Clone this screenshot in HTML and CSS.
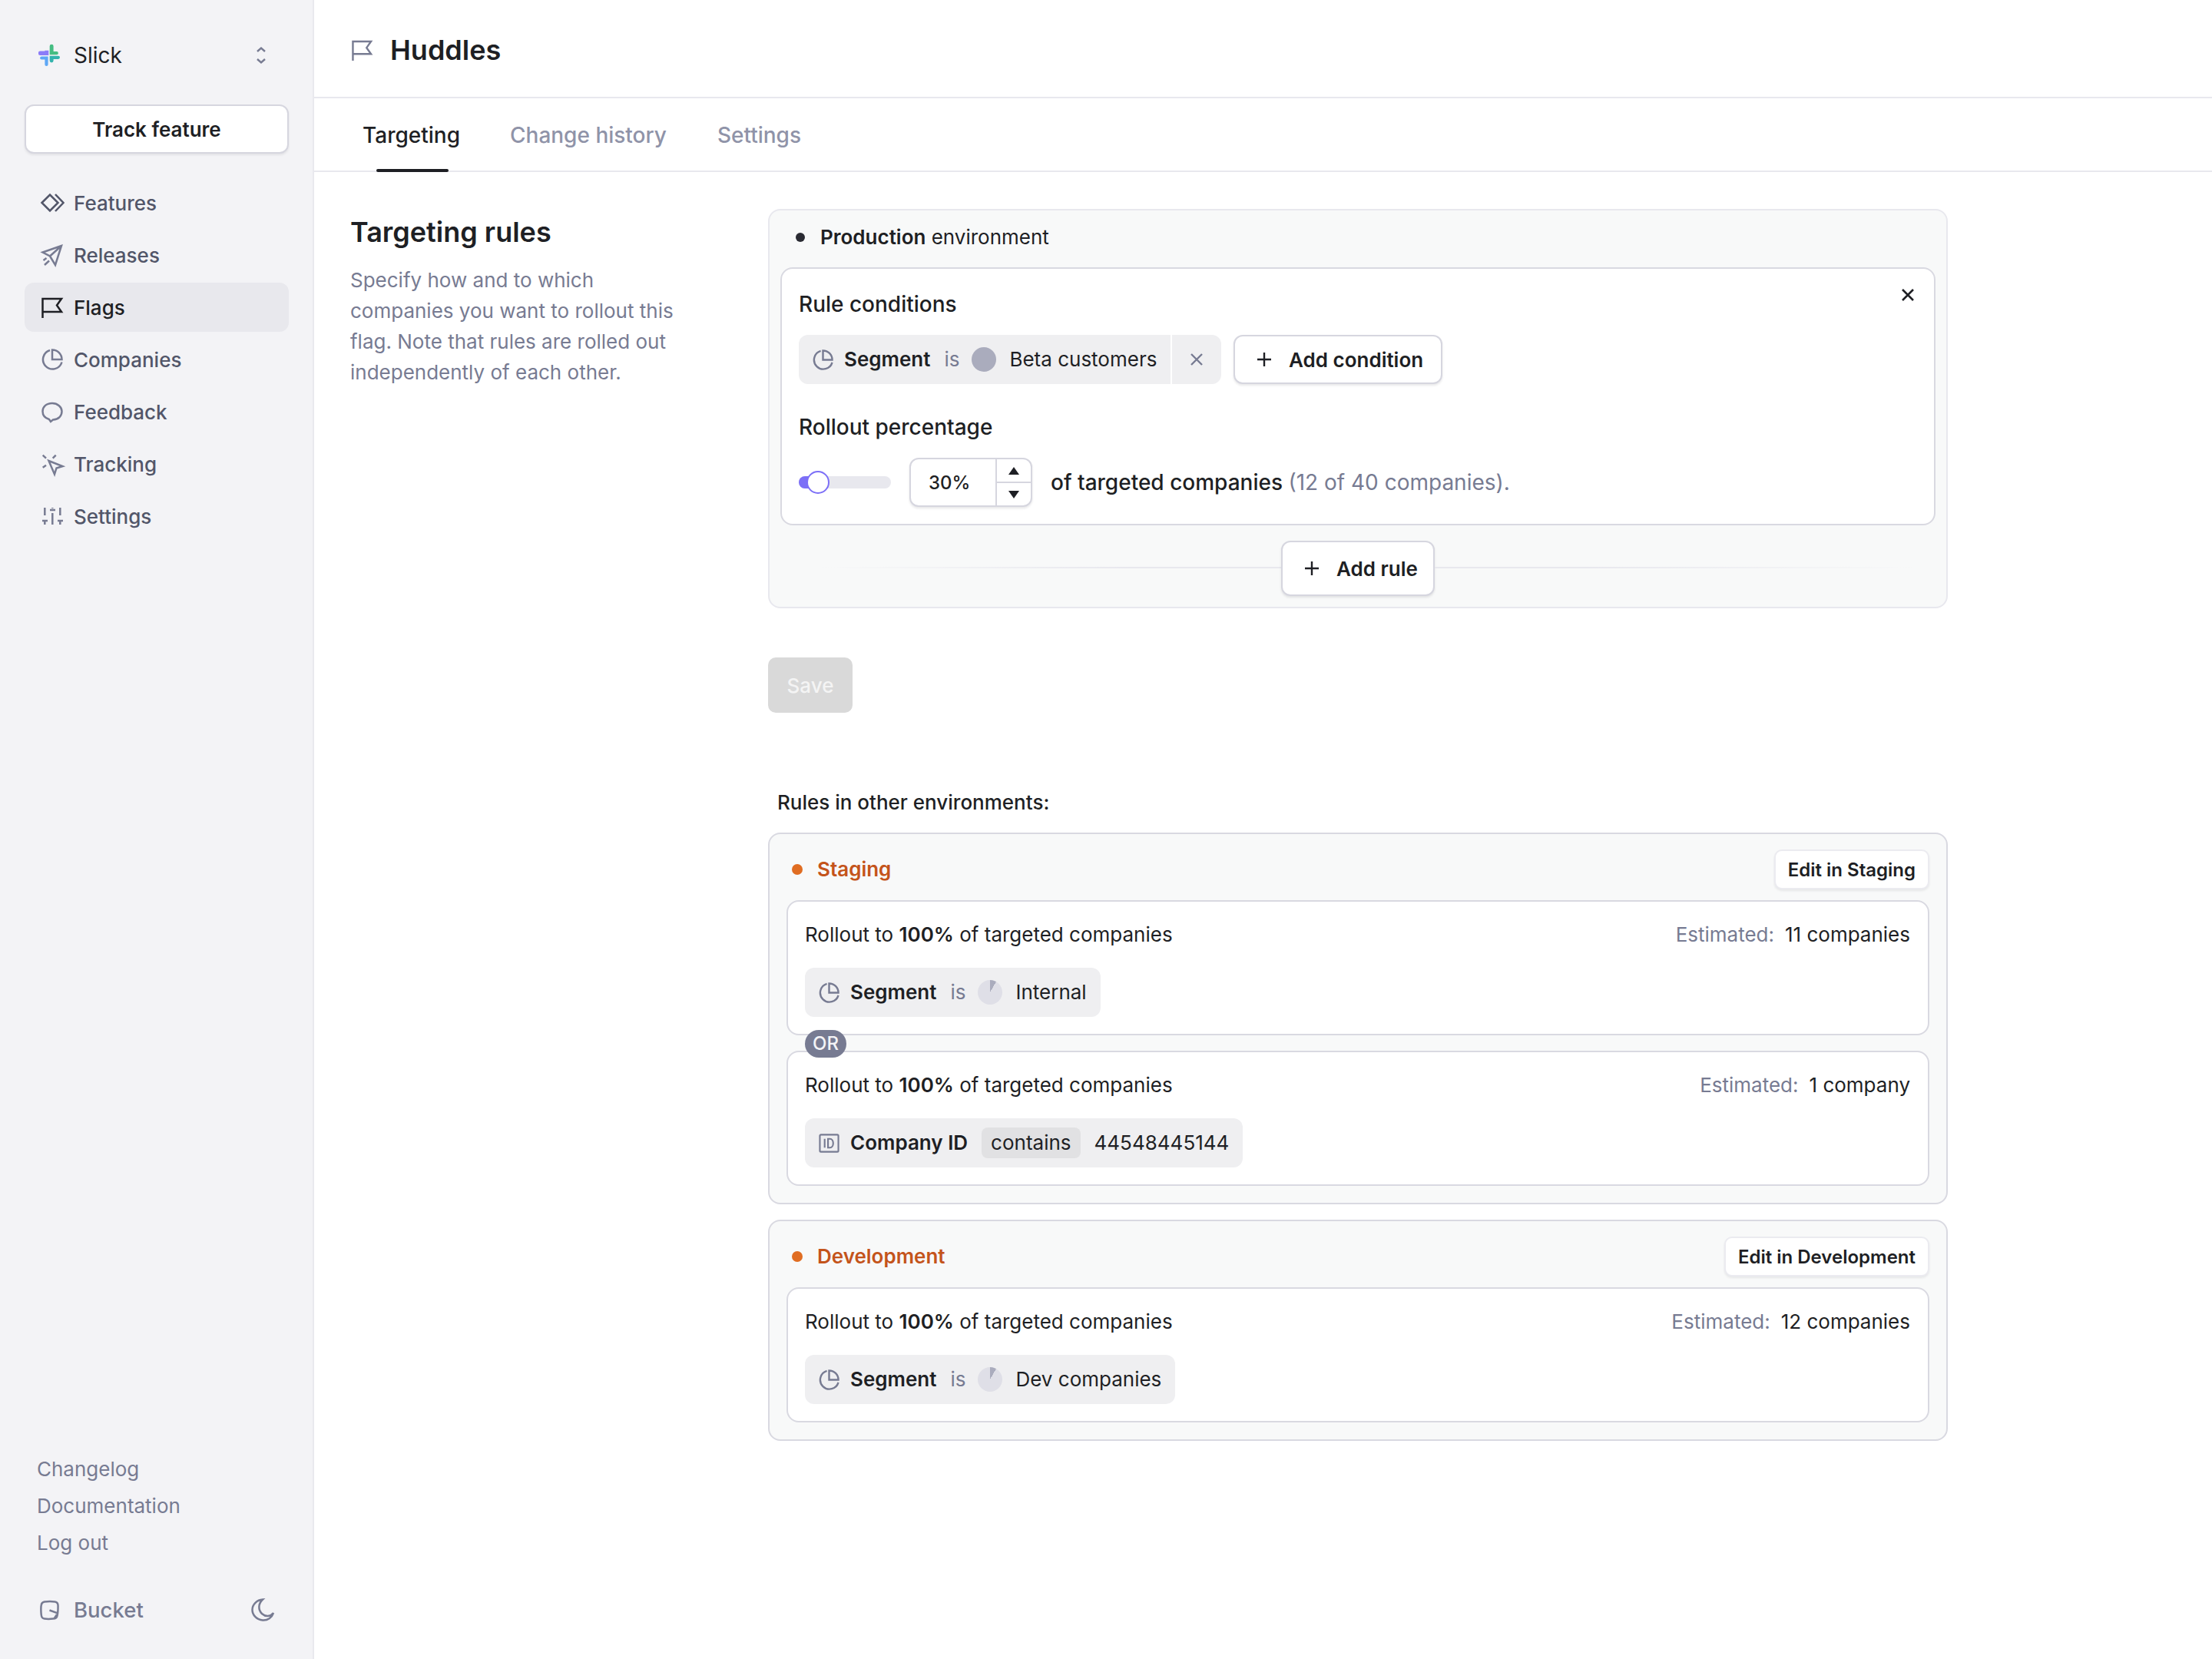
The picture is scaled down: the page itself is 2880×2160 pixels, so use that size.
FILE: index.html
```html
<!DOCTYPE html>
<html lang="en">
<head>
<meta charset="utf-8">
<title>Huddles</title>
<link rel="stylesheet" href="styles.css">
</head>
<body>
<svg class="defs" width="0" height="0" aria-hidden="true">
  <symbol id="pie" viewBox="0 0 28 28"><path d="M11 2A12.5 12.5 0 1 0 26.5 17.5M14 1.5V14H26.5A12.5 12.5 0 0 0 14 1.5Z"/></symbol>
  <symbol id="plus" viewBox="0 0 20 20"><path d="M10 1V19M1 10H19"/></symbol>
  <symbol id="cross" viewBox="0 0 18 18"><path d="M2 2L16 16M16 2L2 16"/></symbol>
</svg>
<div class="app">
  <aside class="sidebar">
    <div class="side-top">
      <div class="org">
        <svg class="logo" viewBox="0 0 80 80">
          <path fill="#8b7cf8" d="M24 22a0 0 0 0 1 0 0H38V40H6a6 6 0 0 1-6-6v-4a6 6 0 0 1 6-6H24Z"/>
          <path fill="#45bd82" d="M42 6a7 7 0 0 1 14 0V26H68a6 6 0 0 1 0 12H42Z"/>
          <path fill="#33b3ad" d="M42 42H74a6 6 0 0 1 0 12H56V60a7 7 0 0 1-14 0Z"/>
          <path fill="#5ea7f5" d="M12 44H36V74a6 6 0 0 1-12 0V56H12a6 6 0 0 1 0-12Z"/>
        </svg>
        <span class="org-name">Slick</span>
        <svg class="updown" viewBox="0 0 12 22"><path d="M1 6L6 1.5L11 6M1 16L6 20.5L11 16"/></svg>
      </div>
      <button class="track">Track feature</button>
      <nav class="nav">
        <a class="nav-item"><svg class="ico strong" viewBox="0 0 28 28"><path d="M0.5 14L11 3.5L21.5 14L11 24.5ZM18 3L28.5 14L18 25"/></svg>Features</a>
        <a class="nav-item"><svg class="ico" viewBox="0 0 28 28"><path d="M26 2L1.5 10.5L11 15.5L18 27ZM11 15.5L26 2M2.5 21L6.5 18M4 27L10 21.5"/></svg>Releases</a>
        <a class="nav-item active"><svg class="ico dark" viewBox="0 0 28 28"><path d="M1.5 28V3H26L20 11.5L26 20H1.5"/></svg>Flags</a>
        <a class="nav-item"><svg class="ico"><use href="#pie"/></svg>Companies</a>
        <a class="nav-item"><svg class="ico" viewBox="0 0 28 28"><path d="M14 3C6 3 1.5 8 1.5 13.5C1.5 19 5 22.5 10 24L12 27L15 24.5C22 24 26.5 20 26.5 13.5C26.5 8 21 3 14 3Z"/></svg>Feedback</a>
        <a class="nav-item"><svg class="ico" viewBox="0 0 28 28"><path d="M9.5 10L27.5 17L19.5 19.5L17 27.5ZM1.7 2.7L6 6.7M18.7 2.7L14.7 6.7M1.7 18.7L6 15.7"/></svg>Tracking</a>
        <a class="nav-item"><svg class="ico" viewBox="0 0 28 28"><path d="M4.3 3V13M1 20H8M4.3 20V25M14.3 3V4M11 6H18M14.3 10V25M24.3 3V13M21 20H28M24.3 20V25"/></svg>Settings</a>
      </nav>
    </div>
    <div class="side-bottom">
      <a class="side-link">Changelog</a>
      <a class="side-link">Documentation</a>
      <a class="side-link">Log out</a>
      <div class="brand">
        <span class="brand-name"><svg class="brand-ico" viewBox="0 0 26 26"><path d="M6 1.5C10 1 17 1 20.5 1.5C23.5 2 24.5 4 24.5 7C24.5 11 24.5 16 23.5 20C23 23 21 24.5 18 24.5C14 25 9 25 6 24.5C3 24 2 22 1.8 19C1.3 14 1.3 9 1.8 6C2.2 3 3.5 2 6 1.5ZM13 13L24 17M24 17C22 20 21 22 19 24.5"/></svg>Bucket</span>
        <svg class="moon" viewBox="0 0 30 30"><path d="M15 1.5C9 7 9 15 14 20C19 24.5 25 24 29 19C27 25 21.500 29 15 28.500C7.500 28 1.500 22 1.500 15C1.500 8 7.500 2 15 1.500Z"/></svg>
      </div>
    </div>
  </aside>

  <main class="main">
    <header class="page-head">
      <svg class="head-flag" viewBox="0 0 28 28"><path d="M1.500 28V2H26L20 10.500L26 19H1.500"/></svg>
      <h1 class="page-title">Huddles</h1>
    </header>
    <div class="tabs">
      <a class="tab current">Targeting</a>
      <a class="tab">Change history</a>
      <a class="tab">Settings</a>
    </div>

    <div class="content">
      <section class="intro">
        <h2 class="intro-title">Targeting rules</h2>
        <p class="intro-text">Specify how and to which companies you want to rollout this flag. Note that rules are rolled out independently of each other.</p>
      </section>

      <section class="rules">
        <div class="env-card prod">
          <div class="prod-head"><span class="dot dark-dot"></span><span><b>Production</b> environment</span></div>
          <div class="rule-edit">
            <svg class="close"><use href="#cross"/></svg>
            <div class="label">Rule conditions</div>
            <div class="cond-row">
              <div class="chip edit">
                <svg class="chip-ico"><use href="#pie"/></svg>
                <b class="field">Segment</b>
                <span class="muted op">is</span>
                <span class="seg-dot solid"></span>
                <span class="val">Beta customers</span>
                <span class="chip-x"><svg class="chip-x-ico"><use href="#cross"/></svg></span>
              </div>
              <button class="btn add-cond"><svg class="plus"><use href="#plus"/></svg>Add condition</button>
            </div>
            <div class="label second">Rollout percentage</div>
            <div class="rollout-row">
              <div class="slider"><span class="slider-fill"></span><span class="thumb"></span></div>
              <div class="stepper">
                <span class="step-val">30%</span>
                <span class="step-btns">
                  <span class="step"><span class="tri up"></span></span>
                  <span class="step"><span class="tri down"></span></span>
                </span>
              </div>
              <span class="rollout-text">of targeted companies <span class="muted light">(12 of 40 companies).</span></span>
            </div>
          </div>
          <div class="add-rule-row">
            <span class="rule-line left"></span>
            <button class="btn add-rule"><svg class="plus"><use href="#plus"/></svg>Add rule</button>
            <span class="rule-line right"></span>
          </div>
        </div>

        <button class="save">Save</button>

        <div class="others-label">Rules in other environments:</div>

        <div class="env-card other">
          <div class="env-head">
            <span class="env-name"><span class="dot orange"></span>Staging</span>
            <button class="edit-btn">Edit in Staging</button>
          </div>
          <div class="rule-list">
            <div class="rule">
              <div class="rule-top"><span>Rollout to <b>100%</b> of targeted companies</span><span class="est"><span class="muted">Estimated:</span>11 companies</span></div>
              <div class="chip">
                <svg class="chip-ico"><use href="#pie"/></svg>
                <b class="field">Segment</b>
                <span class="muted op">is</span>
                <span class="seg-dot pie"></span>
                <span class="val">Internal</span>
              </div>
            </div>
            <span class="or">OR</span>
            <div class="rule">
              <div class="rule-top"><span>Rollout to <b>100%</b> of targeted companies</span><span class="est"><span class="muted">Estimated:</span>1 company</span></div>
              <div class="chip tight">
                <svg class="chip-ico id" viewBox="0 0 28 28"><path d="M3 2.500H25C25.800 2.500 26.500 3.200 26.500 4V24C26.500 24.800 25.800 25.500 25 25.500H3C2.200 25.500 1.500 24.800 1.500 24V4C1.500 3.200 2.200 2.500 3 2.500ZM8 8V20M12.500 8V20H15C21 20 21 8 15 8Z"/></svg>
                <b class="field">Company ID</b>
                <span class="op-box">contains</span>
                <span class="val">44548445144</span>
              </div>
            </div>
          </div>
        </div>

        <div class="env-card other">
          <div class="env-head">
            <span class="env-name"><span class="dot orange"></span>Development</span>
            <button class="edit-btn">Edit in Development</button>
          </div>
          <div class="rule-list">
            <div class="rule">
              <div class="rule-top"><span>Rollout to <b>100%</b> of targeted companies</span><span class="est"><span class="muted">Estimated:</span>12 companies</span></div>
              <div class="chip">
                <svg class="chip-ico"><use href="#pie"/></svg>
                <b class="field">Segment</b>
                <span class="muted op">is</span>
                <span class="seg-dot pie"></span>
                <span class="val">Dev companies</span>
              </div>
            </div>
          </div>
        </div>
      </section>
    </div>
  </main>
</div>
</body>
</html>
```

FILE: styles.css
```css
* { box-sizing: border-box; }
html, body { margin: 0; padding: 0; background: #fff; }
body {
  font-family: Inter, "Noto Sans", sans-serif;
  font-size: 26px;
  line-height: 40px;
  color: #1e1f24;
}
b { font-weight: 600; }
a { display: block; }
button { font-family: inherit; cursor: pointer; }
svg { fill: none; stroke: currentColor; overflow: visible; flex: none; }
.defs { position: absolute; }

.app { display: flex; min-height: 2160px; }

/* sidebar */
.sidebar {
  width: 409px;
  flex: none;
  height: 2160px;
  background: #f3f3f6;
  border-right: 2px solid #e9e9ee;
  padding: 32px 31px 32px 32px;
  display: flex;
  flex-direction: column;
  justify-content: space-between;
}
.org { display: flex; align-items: center; height: 80px; padding: 0 30px 0 18px; }
.logo { width: 28px; height: 28px; stroke: none; margin-right: 18px; }
.org-name { flex: 1; font-size: 28px; }
.updown { width: 12px; height: 22px; color: #777b92; stroke-width: 2.4; }
.track {
  display: block;
  width: 100%;
  height: 64px;
  margin-top: 24px;
  background: #fff;
  border: 2px solid #d6d6df;
  border-radius: 12px;
  box-shadow: 0 2px 3px rgba(30, 31, 36, .08);
  font-size: 26px;
  font-weight: 600;
  color: #1e1f24;
}
.nav { display: flex; flex-direction: column; gap: 4px; margin-top: 32px; }
.nav-item {
  display: flex;
  align-items: center;
  gap: 14px;
  height: 64px;
  padding: 2px 0 0 22px;
  border-radius: 12px;
  color: #525669;
  font-weight: 500;
}
.nav-item.active { background: #e8e8ed; color: #1e1f24; }
.ico { width: 28px; height: 28px; margin-top: -2px; color: #777b92; stroke-width: 2.5; }
.ico.strong { color: #525669; }
.ico.dark { color: #1e1f24; }

.side-bottom { display: flex; flex-direction: column; }
.side-link { height: 48px; line-height: 50px; padding-left: 16px; color: #777b92; }
.brand {
  display: flex;
  align-items: center;
  justify-content: space-between;
  height: 64px;
  margin-top: 32px;
  padding: 0 19px 0 20px;
  color: #777b92;
  font-weight: 500;
  font-size: 27.5px;
}
.brand-name { display: flex; align-items: center; gap: 19px; }
.brand-ico { width: 25px; height: 25px; stroke-width: 2.6; }
.moon { width: 30px; height: 30px; stroke-width: 2.5; }

/* main */
.main { flex: 1; min-width: 0; }
.page-head {
  display: flex;
  align-items: center;
  height: 128px;
  padding: 4px 0 0 49px;
  border-bottom: 2px solid #e8e8ee;
  gap: 23px;
}
.head-flag { width: 27px; height: 27px; color: #777b92; stroke-width: 2.5; }
.page-title { margin: 0; font-size: 36px; line-height: 48px; font-weight: 600; }
.tabs {
  display: flex;
  height: 96px;
  padding-left: 63px;
  gap: 65px;
  border-bottom: 2px solid #e8e8ee;
}
.tab { position: relative; line-height: 96px; font-size: 28px; font-weight: 500; color: #8f93a8; }
.tab:last-child { margin-left: 1px; }
.tab.current { color: #1e1f24; }
.tab.current::after {
  content: "";
  position: absolute;
  left: 18px;
  right: 15px;
  bottom: -2px;
  height: 4px;
  border-radius: 2px;
  background: #1e1f24;
}

.content {
  display: grid;
  grid-template-columns: 544px 1536px;
  padding: 48px 0 0 47px;
}
.intro-title { margin: 8px 0 0; font-size: 36px; line-height: 44px; font-weight: 600; }
.intro-text { margin: 21px 0 0; width: 440px; line-height: 40px; color: #777b92; }

/* cards */
.rules { display: flex; flex-direction: column; align-items: stretch; }
.env-card { background: #f8f9f9; border: 2px solid #d9d9e1; border-radius: 16px; }
.prod { border-color: #e8e8ee; padding: 0 14px 14px; height: 520px; }
.prod-head { display: flex; align-items: center; gap: 20px; height: 68px; margin-bottom: 6px; padding: 1px 0 0 20px; }
.dot { width: 12px; height: 12px; border-radius: 50%; flex: none; }
.dark-dot { background: #2a2b33; }
.orange { width: 14px; height: 14px; background: #e06d22; }

.rule-edit {
  position: relative;
  background: #fff;
  border: 2px solid #d9d9e1;
  border-radius: 16px;
  height: 336px;
  padding: 26px 22px 0;
}
.close { position: absolute; top: 25px; right: 25px; width: 18px; height: 18px; stroke-width: 2.6; color: #1e1f24; }
.label { font-size: 28px; font-weight: 500; }
.label.second { margin-top: 36px; }
.cond-row { display: flex; gap: 16px; margin-top: 20px; }
.chip {
  display: inline-flex;
  align-items: center;
  height: 64px;
  padding: 0 18px;
  background: #efeff1;
  border-radius: 12px;
  align-self: flex-start;
  white-space: nowrap;
}
.chip.edit { width: 550px; padding-right: 0; }
.chip-ico { width: 27px; height: 27px; color: #777b92; stroke-width: 2.500; margin-right: 14px; }
.chip-ico.id { stroke-width: 2.200; }
.field { margin-right: 18px; }
.op { margin-right: 16px; }
.seg-dot { width: 32px; height: 32px; border-radius: 50%; margin-right: 17px; flex: none; }
.seg-dot.solid { background: #aaacbd; }
.seg-dot.pie { background: conic-gradient(#aaacbd 0 30deg, #dfdfe7 30deg 360deg); }
.chip-x {
  display: flex;
  align-items: center;
  justify-content: center;
  width: 66px;
  height: 64px;
  margin-left: auto;
  border-left: 2px solid #fff;
}
.chip-x-ico { width: 18px; height: 18px; color: #777b92; stroke-width: 2.400; }
.op-box { height: 40px; line-height: 40px; padding: 0 12px; background: #e1e1e3; border-radius: 8px; margin-right: 18px; }

.btn {
  display: flex;
  align-items: center;
  background: #fff;
  border: 2px solid #d6d6df;
  border-radius: 12px;
  box-shadow: 0 2px 3px rgba(30, 31, 36, .10);
  font-size: 26px;
  font-weight: 600;
  color: #1e1f24;
  gap: 22px;
}
.plus { width: 20px; height: 20px; stroke-width: 2.400; }
.add-cond { height: 64px; width: 272px; padding-left: 28px; }

.rollout-row { display: flex; align-items: center; margin-top: 20px; height: 64px; }
.slider { position: relative; width: 120px; height: 16px; background: #e8e8ee; border-radius: 8px; margin-right: 24px; }
.slider-fill { position: absolute; left: 0; top: 0; width: 24px; height: 16px; background: #7c6ff7; border-radius: 8px 0 0 8px; }
.thumb { position: absolute; left: 10px; top: -7px; width: 30px; height: 30px; background: #fff; border: 2px solid #7c6ff7; border-radius: 50%; }
.stepper {
  display: flex;
  width: 160px;
  height: 64px;
  background: #fff;
  border: 2px solid #d6d6df;
  border-radius: 12px;
  box-shadow: 0 2px 3px rgba(30, 31, 36, .10);
  margin-right: 24px;
}
.step-val { flex: 1; line-height: 62px; padding-left: 23px; font-size: 24px; font-weight: 500; }
.step-btns { display: flex; flex-direction: column; width: 46px; border-left: 2px solid #d6d6df; }
.step { flex: 1; display: flex; align-items: center; justify-content: center; }
.step:first-child { border-bottom: 2px solid #d6d6df; }
.tri { width: 0; height: 0; border-left: 7px solid transparent; border-right: 7px solid transparent; }
.tri.up { border-bottom: 10px solid #1e1f24; }
.tri.down { border-top: 10px solid #1e1f24; }
.muted { color: #777b92; }
.rollout-text { font-size: 28px; font-weight: 500; }
.light { font-weight: 400; }

.add-rule-row { display: flex; align-items: center; margin-top: 20px; }
.rule-line { flex: 1; height: 2px; margin-top: -2px; }
.rule-line.left { background: linear-gradient(90deg, rgba(232, 232, 238, 0) 8%, #e8e8ee 70%); }
.rule-line.right { background: linear-gradient(90deg, #e8e8ee 30%, rgba(232, 232, 238, 0) 96%); }
.add-rule { height: 72px; width: 200px; padding-left: 28px; }

.save {
  width: 110px;
  height: 72px;
  margin-top: 64px;
  background: #d9d9d9;
  border: none;
  border-radius: 10px;
  color: #f4f4f4;
  font-size: 26px;
  font-weight: 500;
}
.others-label { margin-top: 96px; padding-left: 12px; font-weight: 500; line-height: 42px; height: 40px; }

.other { margin-top: 20px; padding: 20px 22px 22px; }
.env-head { display: flex; align-items: center; justify-content: space-between; margin-bottom: 14px; }
.env-name { display: flex; align-items: center; gap: 19px; padding-left: 7px; color: #c4541b; font-weight: 600; }
.edit-btn {
  height: 52px;
  padding: 0 16px;
  background: #fff;
  border: 2px solid #ebebf0;
  border-radius: 10px;
  box-shadow: 0 2px 3px rgba(30, 31, 36, .08);
  font-size: 24px;
  font-weight: 600;
  color: #1e1f24;
}
.rule-list { position: relative; display: flex; flex-direction: column; gap: 20px; }
.rule {
  height: 176px;
  background: #fff;
  border: 2px solid #d9d9e1;
  border-radius: 16px;
  padding: 23px 22px 0;
  display: flex;
  flex-direction: column;
}
.rule-top { display: flex; justify-content: space-between; margin-bottom: 23px; padding-right: 1px; }
.est { display: flex; gap: 14px; }
.or {
  position: absolute;
  left: 24px;
  top: 169px;
  width: 54px;
  height: 36px;
  line-height: 36px;
  text-align: center;
  background: #777b92;
  color: #f3f3f6;
  border-radius: 18px;
  font-size: 24px;
  font-weight: 500;
}
```
